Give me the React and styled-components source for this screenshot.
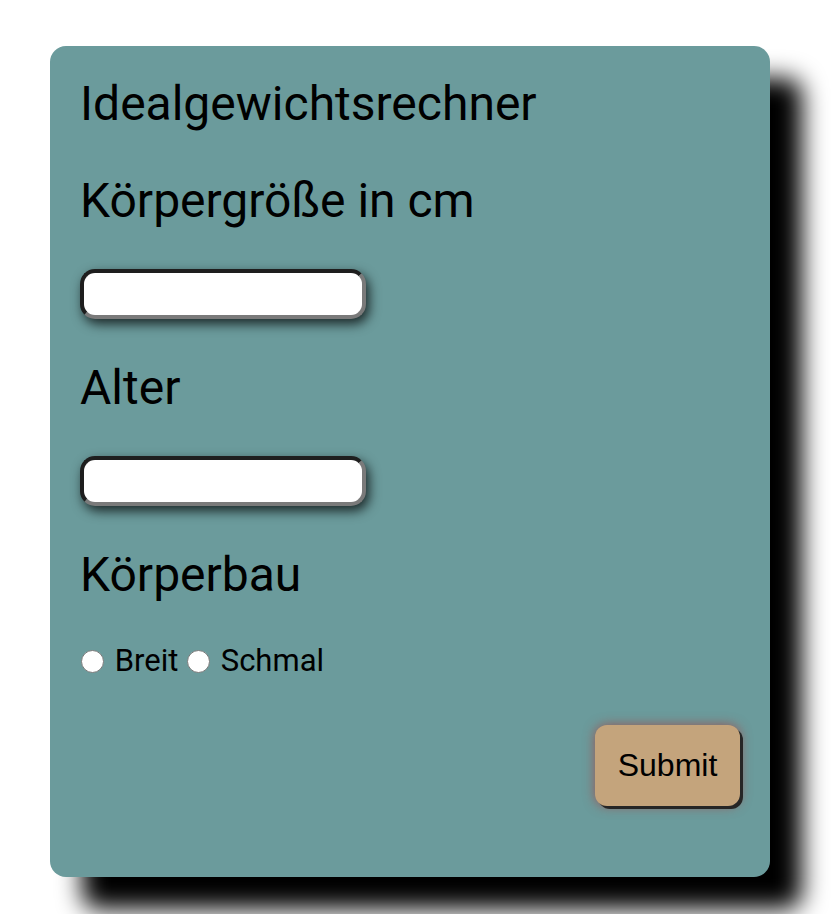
import React from 'react';
import styled, { createGlobalStyle } from 'styled-components';

const GlobalStyle = createGlobalStyle`
  body {
    margin: 0;
    background: #ffffff;
    font-family: Roboto, "Liberation Sans", sans-serif;
  }
`;

const Page = styled.div`
  min-height: 914px;
  box-sizing: border-box;
  padding: 46px 0 0 50px;
`;

const Card = styled.form`
  box-sizing: border-box;
  width: 720px;
  height: 831px;
  background: #6b9b9c;
  border-radius: 16px;
  box-shadow: 32px 32px 24px #000;
  padding: 30px 30px 0 30px;
  display: flex;
  flex-direction: column;
  align-items: flex-start;
`;

const Title = styled.h1`
  margin: 0;
  font-size: 48px;
  font-weight: 400;
  line-height: 56px;
  color: #000;
`;

const Label = styled.label`
  display: block;
  margin-top: ${(p) => p.$top}px;
  font-size: 48px;
  line-height: 56px;
  color: #000;
`;

const Input = styled.input`
  box-sizing: border-box;
  width: 286px;
  height: 50px;
  margin-top: ${(p) => p.$top}px;
  border: 4px solid #7a7a7a;
  border-top-color: #1e1e1e;
  border-left-color: #1e1e1e;
  border-radius: 15px;
  background: #fff;
  box-shadow: 3px 5px 12px rgba(0, 0, 0, 0.75);
  outline: none;
`;

const RadioRow = styled.div`
  margin-top: 40px;
  font-size: 31px;
  line-height: 36px;
  color: #000;
`;

const Radio = styled.input`
  appearance: none;
  box-sizing: border-box;
  width: 23px;
  height: 23px;
  margin: 0 3px 0 1px;
  border: 1.5px solid #7a7a7a;
  border-radius: 50%;
  background: #fff;
  vertical-align: -2px;

  &:checked {
    background: radial-gradient(circle, #1a73e8 0 5px, #fff 6px);
  }
`;

const Actions = styled.div`
  align-self: stretch;
  display: flex;
  justify-content: flex-end;
  margin-top: 46px;
`;

const Submit = styled.button`
  width: 145px;
  height: 81px;
  background: #c4a47c;
  border: none;
  border-radius: 12px;
  box-shadow: 3px 3px 0 #262626, 0 0 12px rgba(170, 60, 60, 0.75);
  font-family: "Liberation Sans", Arial, sans-serif;
  font-size: 32px;
  color: #000;
`;

export default function App() {
  return (
    <>
      <GlobalStyle />
      <Page>
        <Card onSubmit={(e) => e.preventDefault()}>
          <Title>Idealgewichtsrechner</Title>
          <Label $top={41} htmlFor="groesse">Körpergröße in cm</Label>
          <Input $top={40} id="groesse" type="text" />
          <Label $top={41} htmlFor="alter">Alter</Label>
          <Input $top={40} id="alter" type="text" />
          <Label $top={41}>Körperbau</Label>
          <RadioRow>
            <Radio type="radio" name="bau" id="breit" /> Breit{' '}
            <Radio type="radio" name="bau" id="schmal" /> Schmal
          </RadioRow>
          <Actions>
            <Submit type="submit">Submit</Submit>
          </Actions>
        </Card>
      </Page>
    </>
  );
}
